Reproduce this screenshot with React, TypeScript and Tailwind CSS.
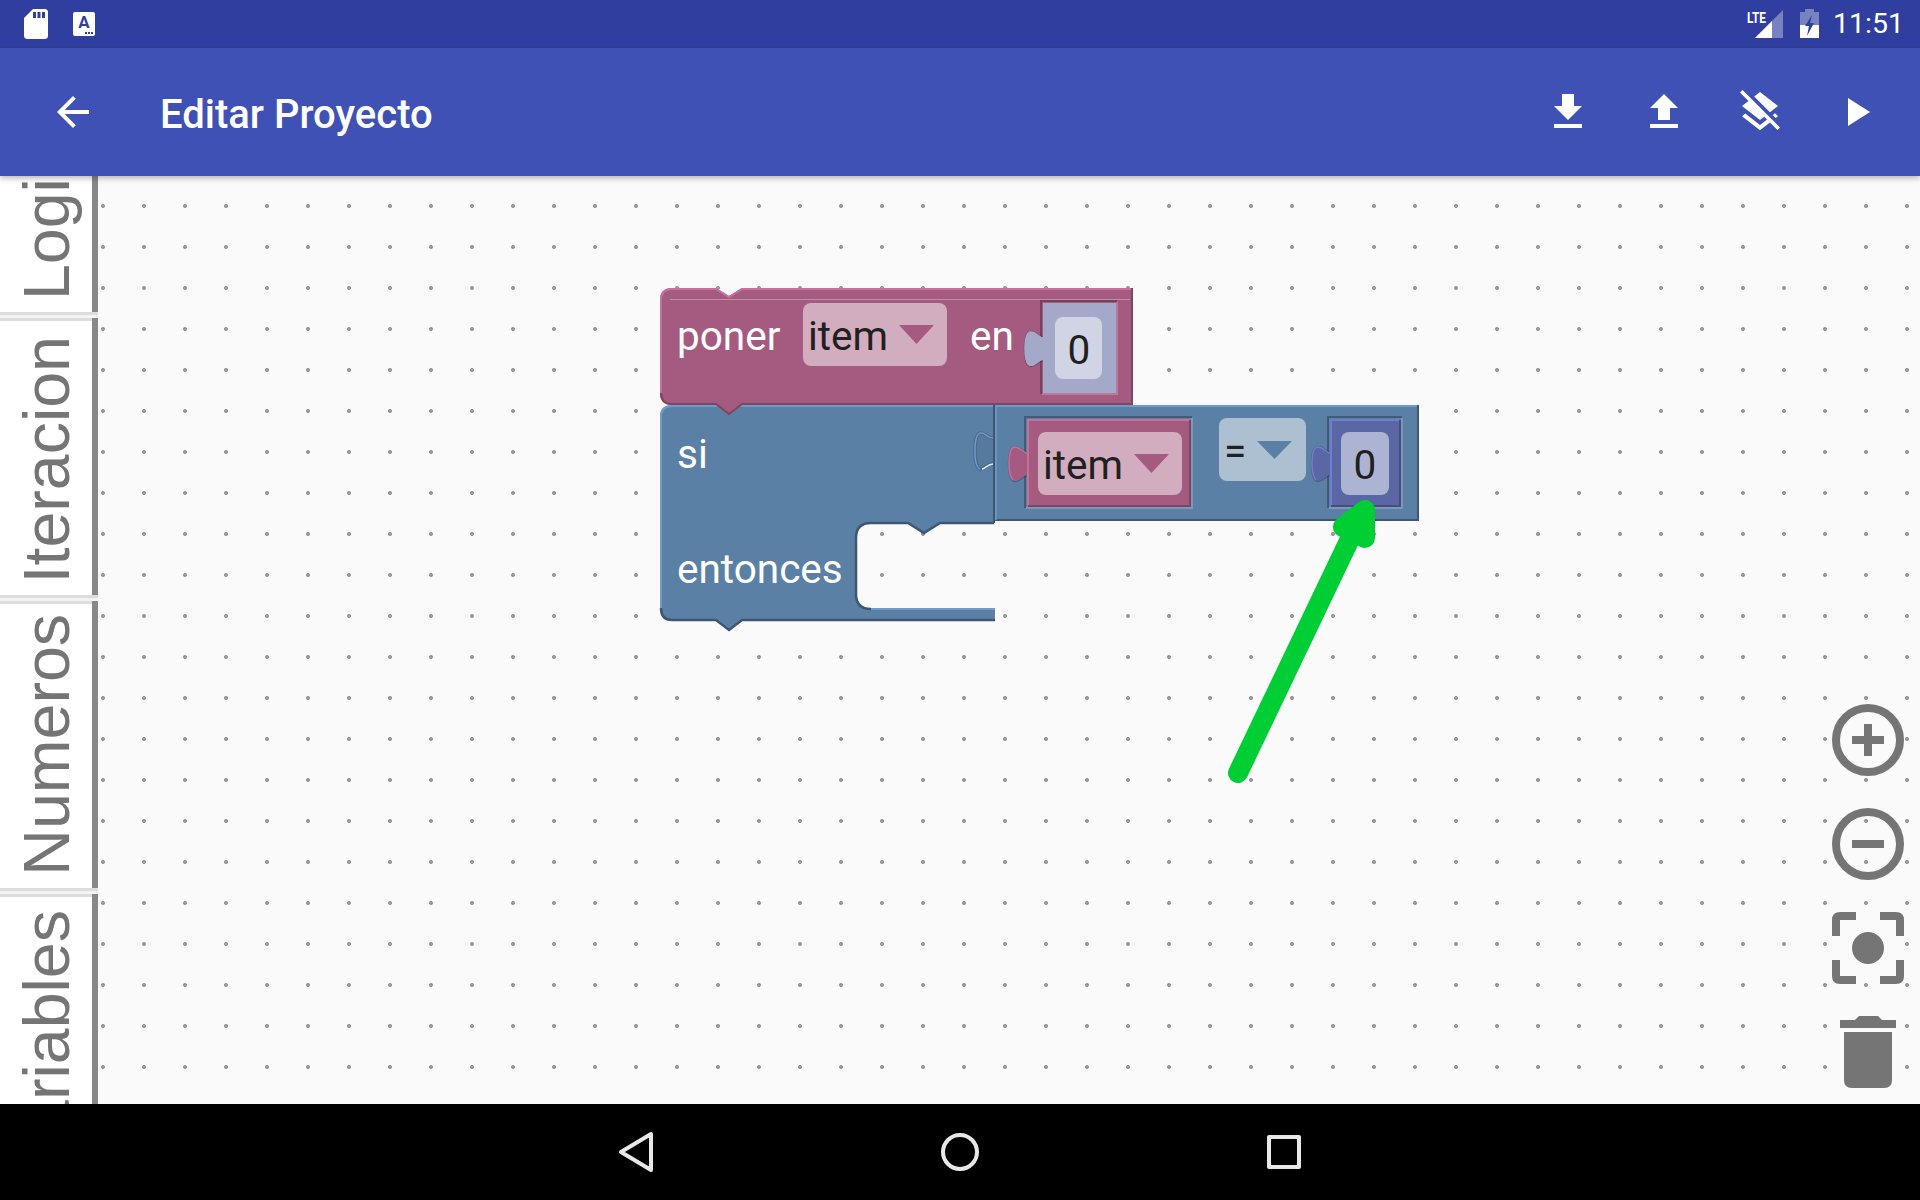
import React from "react";

const PINK = "#A55B80";
const BLUE = "#5B80A5";
const INDIGO = "#5B67A5";
const ROBOTO = "font-['Roboto',sans-serif]";

function Icon48({ d }: { d: string }) {
  return (
    <svg width="48" height="48" viewBox="0 0 24 24" fill="#fff">
      <path d={d} />
    </svg>
  );
}

function tabPath(x: number, y: number) {
  return `M${x} ${y + 6}C${x - 6} ${y + 6} ${x - 7} ${y} ${x - 13} ${y}C${x - 18} ${y} ${x - 19} ${y + 8} ${x - 19} ${y + 17}C${x - 19} ${y + 26} ${x - 18} ${y + 34} ${x - 13} ${y + 34}C${x - 7} ${y + 34} ${x - 6} ${y + 28} ${x} ${y + 28}Z`;
}

function tabEdge(x: number, y: number) {
  return `M${x} ${y + 6}C${x - 6} ${y + 6} ${x - 7} ${y} ${x - 13} ${y}C${x - 18} ${y} ${x - 19} ${y + 8} ${x - 19} ${y + 17}C${x - 19} ${y + 24} ${x - 18} ${y + 30} ${x - 15} ${y + 33}`;
}

function Slot({ x, y, w, h, fill, light, dark, tabY }: { x: number; y: number; w: number; h: number; fill: string; light: string; dark: string; tabY: number }) {
  return (
    <g>
      <path d={`M${x - 2} ${y + h + 1}V${y - 2}H${x + w + 1}`} fill="none" stroke="#000" strokeOpacity="0.28" strokeWidth="2" />
      <path d={`M${x + w + 1} ${y - 1}V${y + h + 1}H${x - 1}`} fill="none" stroke="#fff" strokeOpacity="0.2" strokeWidth="2" />
      <path d={tabPath(x + 1, tabY)} fill={fill} stroke="#000" strokeOpacity="0.2" strokeWidth="2.5" />
      <path d={tabPath(x + 1, tabY)} fill={fill} />
      <path d={tabEdge(x + 1, tabY)} fill="none" stroke={light} strokeWidth="1.5" />
      <rect x={x} y={y} width={w} height={h} fill={fill} />
      <path d={`M${x + 1} ${y + h}V${y + 1}H${x + w}`} fill="none" stroke={light} strokeWidth="2" />
      <path d={`M${x + w - 1} ${y + 1}V${y + h - 1}H${x + 1}`} fill="none" stroke={dark} strokeWidth="2" />
    </g>
  );
}

function Blocks() {
  const txt = `${ROBOTO} text-[40.5px]`;
  return (
    <svg className="absolute inset-0" width="1822" height="928" viewBox="98 176 1822 928">
      {/* blue statement block */}
      <path d="M660 417Q660 405 672 405H994V523H940L924 533L908 523H871Q856 523 856 538V594Q856 609 871 609H995V620H742L729 630L716 620H672Q660 620 660 608Z" fill={BLUE} />
      <path d="M661 608V417Q661 406 672 406H994" fill="none" stroke="#6F9BC9" strokeWidth="2" />
      <path d="M672 620H716L729 630L742 620H995M661 608Q661 620 672 620" fill="none" stroke="#3D5672" strokeWidth="2.5" />
      <path d="M994 523H940L924 533L908 523H871Q856 523 856 538V594Q856 609 871 609" fill="none" stroke="#3D5672" strokeWidth="2.5" />
      <path d="M871 609H995" fill="none" stroke="#6F9BC9" strokeWidth="2" />

      {/* blue value block */}
      <rect x="995" y="405" width="424" height="116" fill={BLUE} />
      <path d="M995 406H1419" stroke="#6F9BC9" strokeWidth="2" fill="none" />
      <path d="M995 520H1419M1418 405V521" stroke="#3D5672" strokeWidth="2" fill="none" />
      <path d="M994 405V523" stroke="#3D5672" strokeWidth="2" fill="none" />
      <path d="M996 407V520" stroke="#6F9BC9" strokeWidth="1.5" fill="none" />
      <path d="M993 438C987 438 986 433 981 433C977 433 975 440 975 451C975 461 977 468 980 469C984 470 987 463 993 464" fill="#557A9E" stroke="#4A6A8C" strokeWidth="3.5" />
      <path d="M993 438C987 438 986 433 981 433C977 433 975 440 975 451C975 461 977 468 980 469" fill="none" stroke="#6F9BC9" strokeWidth="1.5" />
      <path d="M982 469C985 469 988 464 993 464" fill="none" stroke="#E4EDF5" strokeWidth="1.5" />

      {/* pink variable in value */}
      <Slot x={1027} y={419} w={164} h={88} fill={PINK} light="#C86F9C" dark="#7D4561" tabY={447} />
      <rect x="1038" y="432" width="144" height="63" rx="8" fill="#D2ADBF" />
      <text x="1043" y="479" fill="#202020" className={txt}>item</text>
      <polygon points="1134,454 1169,454 1151.5,473" fill={PINK} />

      {/* = dropdown */}
      <rect x="1219" y="418" width="87" height="63" rx="8" fill="#ADC0D2" />
      <text x="1224" y="465" fill="#202020" className={txt}>=</text>
      <polygon points="1257,441 1292,441 1274.5,459" fill={BLUE} />

      {/* indigo number */}
      <Slot x={1330} y={419} w={71} h={88} fill={INDIGO} light="#6F7ED0" dark="#454E7D" tabY={447} />
      <rect x="1341" y="432" width="48" height="63" rx="8" fill="#ADB3D2" />
      <text x="1365" y="479" textAnchor="middle" fill="#202020" className={txt}>0</text>

      {/* pink set block */}
      <path d="M660 300Q660 288 672 288H716L729 296L742 288H1133V405H742L729 415L716 405H672Q660 405 660 393Z" fill={PINK} />
      <path d="M661 393V300Q661 289 672 289H716L729 297L742 289H1132" fill="none" stroke="#C86F9C" strokeWidth="2" />
      <path d="M670 299.5H1130" stroke="#C48CA8" strokeWidth="1" fill="none" />
      <path d="M661 393Q661 404 672 404H716L729 414L742 404H1133M1132 288V405" fill="none" stroke="#7D4561" strokeWidth="2" />
      <text x="677" y="350" fill="#fff" className={txt}>poner</text>
      <rect x="803" y="303" width="144" height="63" rx="8" fill="#D2ADBF" />
      <text x="808" y="350" fill="#202020" className={txt}>item</text>
      <polygon points="899,325 934,325 916.5,344" fill={PINK} />
      <text x="970" y="350" fill="#fff" className={txt}>en</text>
      <Slot x={1043} y={303} w={73} h={90} fill="#A4A9C9" light="#A4A9C9" dark="#A4A9C9" tabY={332} />
      <rect x="1055" y="317" width="47" height="62" rx="8" fill="#D1D4E4" />
      <text x="1079" y="364" textAnchor="middle" fill="#202020" className={txt}>0</text>

      <text x="677" y="468" fill="#fff" className={txt}>si</text>
      <text x="677" y="583" fill="#fff" className={txt}>entonces</text>

      {/* arrow */}
      <g fill="none" stroke="#00CE35" strokeWidth="20" strokeLinecap="round" strokeLinejoin="round">
        <path d="M1238 773L1358 522" />
        <path d="M1343 527L1365 510L1365 538Z" fill="#00CE35" />
      </g>
    </svg>
  );
}

function ZoomIcon({ minus }: { minus?: boolean }) {
  return (
    <svg width="72" height="72" viewBox="0 0 72 72" fill="none" stroke="#757575">
      <circle cx="36" cy="36" r="32" strokeWidth="8" />
      <path d={minus ? "M20 36H52" : "M20 36H52M36 20V52"} strokeWidth="8" />
    </svg>
  );
}

function Tab({ h, label, bottom, topLine }: { h: string; label: string; bottom: string; topLine?: boolean }) {
  return (
    <div className={`${h} shrink-0 flex border-r-[6px] border-[#888888] bg-white overflow-hidden`}>
      <div className={`w-[92px] flex flex-col items-start justify-end overflow-hidden ${topLine ? "border-t-[3px] border-[#dddddd]" : ""}`}>
        <span className={`[writing-mode:vertical-rl] rotate-180 font-['Liberation_Sans',Arial,sans-serif] text-[64.5px] leading-[65px] text-[#757575] whitespace-nowrap ml-[15px] ${bottom}`}>
          {label}
        </span>
      </div>
    </div>
  );
}

function Sep() {
  return <div className="h-[6px] w-[98px] shrink-0 border-t-[3px] border-[#dddddd] bg-[#f3f3f3]" />;
}

export default function App() {
  return (
    <div className="w-[1920px] h-[1200px] flex flex-col overflow-hidden bg-black">
      {/* status bar */}
      <div className="h-12 shrink-0 bg-[#303F9F] flex items-center justify-between pl-[18px] pr-[16px]">
        <div className="flex items-center">
          <svg width="36" height="36" viewBox="0 0 24 24" fill="#fff">
            <path d="M18 2h-8L4.02 8 4 20c0 1.1.9 2 2 2h12c1.1 0 2-.9 2-2V4c0-1.1-.9-2-2-2zm-6 6h-2V4h2v4zm3 0h-2V4h2v4zm3 0h-2V4h2v4z" />
          </svg>
          <div className="relative ml-[19px] w-[22px] h-[24px] rounded-[2px] bg-white flex justify-center">
            <span className={`${ROBOTO} text-[#303F9F] font-bold text-[17px] leading-[20px]`}>A</span>
            <div className="absolute right-[2px] bottom-[2px] flex gap-[1px]">
              <div className="w-[2px] h-[2px] bg-[#303F9F]" />
              <div className="w-[2px] h-[2px] bg-[#303F9F]" />
              <div className="w-[2px] h-[2px] bg-[#303F9F]" />
            </div>
          </div>
        </div>
        <div className="flex items-center gap-[8px]">
          <svg width="80" height="48" viewBox="1745 0 80 48">
            <text x="1747" y="22.5" fill="#fff" textLength="19" lengthAdjust="spacingAndGlyphs" className={`${ROBOTO} font-bold text-[15px]`}>LTE</text>
            <polygon points="1755,38 1783,10 1783,38" fill="#fff" fillOpacity="0.35" />
            <polygon points="1755,38 1772,21 1772,38" fill="#fff" />
            <path d="M1800 12H1805V9H1814V12H1819V25H1800Z" fill="#fff" fillOpacity="0.35" />
            <rect x="1800" y="25" width="19" height="13" fill="#fff" />
            <polygon points="1812,15 1805,26 1809,26 1807,36 1814,23 1810,23" fill="#303F9F" />
          </svg>
          <span className={`${ROBOTO} text-white text-[28.5px] leading-none`}>11:51</span>
        </div>
      </div>

      {/* toolbar */}
      <div className="h-[128px] shrink-0 relative z-10 bg-[#3F51B5] shadow-[0_2px_6px_rgba(0,0,0,0.3)] flex items-center justify-between pl-[49px] pr-[40px]">
        <div className="flex items-center">
          <Icon48 d="M20 11H7.83l5.59-5.59L12 4l-8 8 8 8 1.41-1.41L7.83 13H20v-2z" />
          <span className={`${ROBOTO} ml-[63px] mt-[5px] text-white font-medium text-[40px] leading-none`}>Editar Proyecto</span>
        </div>
        <div className="flex items-center gap-12">
          <Icon48 d="M19 9h-4V3H9v6H5l7 7 7-7zM5 18v2h14v-2H5z" />
          <Icon48 d="M9 16h6v-6h4l-7-7-7 7h4zm-4 2h14v2H5z" />
          <Icon48 d="M19.81 14.99l1.19-.92-1.43-1.43-1.19.92 1.43 1.43zm-.45-4.72L21 9l-9-7-2.91 2.27 7.87 7.88 2.4-1.88zM3.27 1L2 2.27l4.22 4.22L3 9l1.63 1.27L12 16l2.1-1.63 1.43 1.43L12 18.54l-7.37-5.73L3 14.07l9 7 4.95-3.85L20.73 21 22 19.73 3.27 1z" />
          <Icon48 d="M8 5v14l11-7z" />
        </div>
      </div>

      {/* main */}
      <div className="h-[928px] shrink-0 flex overflow-hidden">
        <div className="w-[98px] shrink-0 flex flex-col bg-white overflow-hidden">
          <Tab h="h-[136px]" label="Logica" bottom="mb-[12px]" />
          <Sep />
          <Tab h="h-[277px]" label="Iteracion" bottom="mb-[12px]" topLine />
          <Sep />
          <Tab h="h-[287px]" label="Numeros" bottom="mb-[12px]" topLine />
          <Sep />
          <Tab h="h-[210px]" label="Variables" bottom="mb-[-70px]" topLine />
        </div>
        <div className="relative flex-1 bg-[#FAFAFA] bg-[radial-gradient(circle_at_5px_30px,#999999_1.7px,transparent_2.3px)] bg-[length:41px_41px]">
          <Blocks />
          <div className="absolute right-4 bottom-4 flex flex-col gap-8">
            <ZoomIcon />
            <ZoomIcon minus />
            <svg width="72" height="72" viewBox="0 0 72 72" fill="#757575">
              <circle cx="36" cy="36" r="16" />
              <path d="M8 0H24V8H8V24H0V8Q0 0 8 0ZM48 0H64Q72 0 72 8V24H64V8H48ZM0 48H8V64H24V72H8Q0 72 0 64ZM64 48H72V64Q72 72 64 72H48V64H64Z" />
            </svg>
            <svg width="72" height="72" viewBox="0 0 72 72" fill="#757575">
              <path d="M8 4H23L27 0H46L50 4H64V12H8Z" />
              <path d="M12 16H60V64Q60 72 52 72H20Q12 72 12 64Z" />
            </svg>
          </div>
        </div>
      </div>

      {/* nav */}
      <div className="h-24 shrink-0 bg-black flex justify-center items-center">
        <div className="w-[324px] flex justify-center">
          <svg width="36" height="42" viewBox="0 0 36 42" fill="none" stroke="#e8e8e8" strokeWidth="4" strokeLinejoin="round">
            <path d="M33 3V39L3 21Z" />
          </svg>
        </div>
        <div className="w-[324px] flex justify-center">
          <svg width="40" height="40" viewBox="0 0 40 40" fill="none" stroke="#e8e8e8" strokeWidth="4">
            <circle cx="20" cy="20" r="17" />
          </svg>
        </div>
        <div className="w-[324px] flex justify-center">
          <svg width="34" height="34" viewBox="0 0 34 34" fill="none" stroke="#e8e8e8" strokeWidth="4" strokeLinejoin="round">
            <rect x="2" y="2" width="30" height="30" />
          </svg>
        </div>
      </div>
    </div>
  );
}
